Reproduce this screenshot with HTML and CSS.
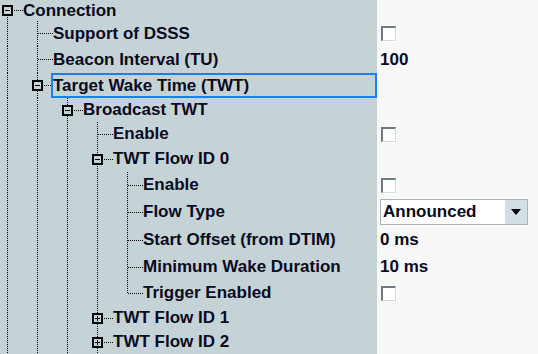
FILE: index.html
```html
<!DOCTYPE html>
<html lang="en">

<head>
    <meta charset="UTF-8">
    <title>Connection settings</title>
    <link rel="stylesheet" href="styles.css">
</head>

<body>
    <div class="grid">
        <div class="row h21">
            <div class="tree">
                <span class="c top"><i class="box"></i></span>
                <span class="label">Connection</span>
            </div>
            <div class="val"></div>
        </div>
        <div class="row h25">
            <div class="tree">
                <span class="g"></span><span class="c tee"></span>
                <span class="label">Support of DSSS</span>
            </div>
            <div class="val"><span class="check"></span></div>
        </div>
        <div class="row h27">
            <div class="tree">
                <span class="g"></span><span class="c tee"></span>
                <span class="label">Beacon Interval (TU)</span>
            </div>
            <div class="val">100</div>
        </div>
        <div class="row h25">
            <div class="tree">
                <span class="g"></span><span class="c tee"><i class="box"></i></span>
                <span class="label sel">Target Wake Time (TWT)</span>
            </div>
            <div class="val"></div>
        </div>
        <div class="row h24">
            <div class="tree">
                <span class="g"></span><span class="g"></span><span class="c tee"><i class="box"></i></span>
                <span class="label">Broadcast TWT</span>
            </div>
            <div class="val"></div>
        </div>
        <div class="row h24">
            <div class="tree">
                <span class="g"></span><span class="g"></span><span class="g"></span><span class="c tee"></span>
                <span class="label">Enable</span>
            </div>
            <div class="val"><span class="check"></span></div>
        </div>
        <div class="row h26">
            <div class="tree">
                <span class="g"></span><span class="g"></span><span class="g"></span><span class="c tee"><i class="box"></i></span>
                <span class="label">TWT Flow ID 0</span>
            </div>
            <div class="val"></div>
        </div>
        <div class="row h26">
            <div class="tree">
                <span class="g"></span><span class="g"></span><span class="g"></span><span class="g"></span><span class="c tee"></span>
                <span class="label">Enable</span>
            </div>
            <div class="val"><span class="check"></span></div>
        </div>
        <div class="row h28">
            <div class="tree">
                <span class="g"></span><span class="g"></span><span class="g"></span><span class="g"></span><span class="c tee"></span>
                <span class="label">Flow Type</span>
            </div>
            <div class="val">
                <div class="combo">
                    <span class="combo-text">Announced</span>
                    <span class="combo-btn"><i class="arrow"></i></span>
                </div>
            </div>
        </div>
        <div class="row h28">
            <div class="tree">
                <span class="g"></span><span class="g"></span><span class="g"></span><span class="g"></span><span class="c tee"></span>
                <span class="label">Start Offset (from DTIM)</span>
            </div>
            <div class="val">0 ms</div>
        </div>
        <div class="row h26">
            <div class="tree">
                <span class="g"></span><span class="g"></span><span class="g"></span><span class="g"></span><span class="c tee"></span>
                <span class="label">Minimum Wake Duration</span>
            </div>
            <div class="val">10 ms</div>
        </div>
        <div class="row h26">
            <div class="tree">
                <span class="g"></span><span class="g"></span><span class="g"></span><span class="g"></span><span class="c end"></span>
                <span class="label">Trigger Enabled</span>
            </div>
            <div class="val"><span class="check"></span></div>
        </div>
        <div class="row h24">
            <div class="tree">
                <span class="g"></span><span class="g"></span><span class="g"></span><span class="c tee"><i class="box plus"></i></span>
                <span class="label">TWT Flow ID 1</span>
            </div>
            <div class="val"></div>
        </div>
        <div class="row h24">
            <div class="tree">
                <span class="g"></span><span class="g"></span><span class="g"></span><span class="c tee"><i class="box plus"></i></span>
                <span class="label">TWT Flow ID 2</span>
            </div>
            <div class="val"></div>
        </div>
    </div>
</body>

</html>
```

FILE: styles.css
```css
* {
    margin: 0;
    padding: 0;
    box-sizing: border-box;
}

:root {
    --tree-bg: #c5d3d7;
    --vdot: repeating-linear-gradient(#000 0 1px, transparent 1px 2px);
    --hdot: repeating-linear-gradient(90deg, #000 0 1px, transparent 1px 2px);
}

body {
    width: 538px;
    height: 354px;
    overflow: hidden;
    background: #f8f8f8;
    font-family: 'Liberation Sans', Arial, sans-serif;
    font-weight: bold;
    font-size: 17px;
    color: #0a0a20;
}

.row {
    display: grid;
    grid-template-columns: 377px 1fr;
}

.h21 { height: 21px; }
.h24 { height: 24px; }
.h25 { height: 25px; }
.h26 { height: 26px; }
.h27 { height: 27px; }
.h28 { height: 28px; }

.tree {
    display: flex;
    align-items: center;
    background: var(--tree-bg);
    height: 100%;
}

/* indent guides */
.g {
    flex: none;
    width: 30px;
    height: 100%;
    background: var(--vdot) 7px 0 / 1px 100% no-repeat;
}

.c {
    flex: none;
    width: 23px;
    height: 100%;
    display: flex;
    align-items: center;
}

.tee {
    background: var(--hdot) 8px 50% / 15px 1px no-repeat,
        var(--vdot) 7px 0 / 1px 100% no-repeat;
}

.end {
    background: var(--hdot) 8px 50% / 15px 1px no-repeat,
        var(--vdot) 7px 0 / 1px 50% no-repeat;
}

.top {
    background: var(--hdot) 8px 50% / 15px 1px no-repeat,
        var(--vdot) 7px 100% / 1px 50% no-repeat;
}

.box {
    display: block;
    width: 11px;
    height: 11px;
    margin-left: 2px;
    border: 2px solid #000;
    background: linear-gradient(#000, #000) center / 5px 1px no-repeat, var(--tree-bg);
}

.box.plus {
    background: linear-gradient(#000, #000) center / 5px 1px no-repeat,
        linear-gradient(#000, #000) center / 1px 5px no-repeat, var(--tree-bg);
}

.label {
    white-space: nowrap;
}

.sel {
    flex: 1;
    align-self: stretch;
    display: flex;
    align-items: center;
    margin-left: -2px;
    padding-left: 0;
    border: 2px solid #1a7ff0;
}

.val {
    display: flex;
    align-items: center;
    padding-left: 3px;
    height: 100%;
}

.check {
    display: block;
    width: 15px;
    height: 15px;
    margin-left: 1px;
    background: #fff;
    border-top: 2px solid #6e7b81;
    border-left: 2px solid #6e7b81;
    border-right: 1px solid #cfdadf;
    border-bottom: 1px solid #cfdadf;
    box-shadow: 1px 1px 0 #fff;
}

.combo {
    display: flex;
    width: 148px;
    height: 26px;
    border: 1px solid #a9b5ba;
    background: #fff;
}

.combo-text {
    flex: 1;
    display: flex;
    align-items: center;
    padding-left: 2px;
}

.combo-btn {
    width: 22px;
    display: flex;
    align-items: center;
    justify-content: center;
    background: #d3dfe4;
}

.arrow {
    display: block;
    width: 0;
    height: 0;
    border-left: 5px solid transparent;
    border-right: 5px solid transparent;
    border-top: 6px solid #000;
}
```
